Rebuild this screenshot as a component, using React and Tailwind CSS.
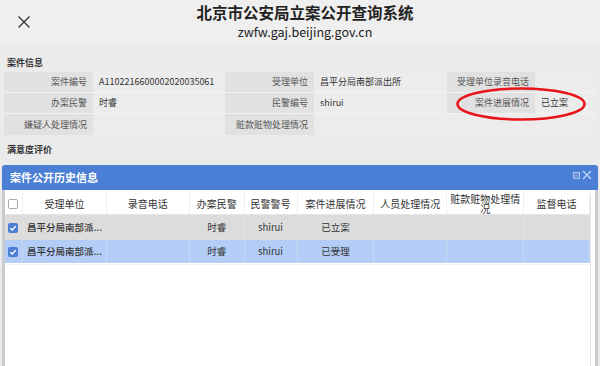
import React from "react";

const font = { fontFamily: '"Noto Sans CJK SC", "Noto Sans", sans-serif' };

function InfoRow({ cells, last }) {
  return (
    <div className={"flex h-[21px] " + (last ? "" : "border-b border-[#f3f3f3]")}>
      {cells.map((c, i) => (
        <div
          key={i}
          className={
            "flex items-center text-[9px] " +
            (c.label
              ? "justify-end pr-[6px] bg-[#e1e1e1] text-[#555]"
              : "justify-start pl-[6px] bg-[#ececec] text-[#333]")
          }
          style={{ width: c.w, flex: c.grow ? 1 : "none" }}
        >
          {c.t}
        </div>
      ))}
    </div>
  );
}

function Check({ checked }) {
  return checked ? (
    <div className="w-[10px] h-[10px] rounded-[2px] bg-[#4a7fd5] flex items-center justify-center">
      <svg width="8" height="8" viewBox="0 0 8 8">
        <path d="M1.2 4.2 L3.2 6 L6.8 2" fill="none" stroke="white" strokeWidth="1.3" />
      </svg>
    </div>
  ) : (
    <div className="w-[10px] h-[10px] rounded-[2px] bg-white border border-[#aaa]" />
  );
}

const cols = [18, 84, 83, 55, 53, 77, 73, 77, 66];

export default function App() {
  const headers = ["", "受理单位", "录音电话", "办案民警", "民警警号", "案件进展情况", "人员处理情况", "赃款赃物处理情\n况", "监督电话"];
  const rows = [
    { bg: "bg-[#dcdcdc]", status: "已立案" },
    { bg: "bg-[#b4cdf6]", status: "已受理" },
  ];
  return (
    <div className="relative w-[600px] h-[366px] overflow-hidden bg-[#ebebeb]" style={font}>
      {/* top bar */}
      <div className="relative h-[45px] bg-[#efefef] flex flex-col items-center pl-[10px]">
        <svg className="absolute left-[18px] top-[16px]" width="12" height="12" viewBox="0 0 12 12">
          <path d="M0.5 0.5 L11.5 11.5 M11.5 0.5 L0.5 11.5" stroke="#333" strokeWidth="1.3" />
        </svg>
        <div className="mt-[2px] text-[15.5px] leading-[20px] font-bold text-[#222]">北京市公安局立案公开查询系统</div>
        <div className="text-[12.5px] leading-[16px] text-[#222] mt-[2px]">zwfw.gaj.beijing.gov.cn</div>
      </div>

      {/* case info */}
      <div className="px-[7px] mt-[12px] h-[15px] text-[9px] leading-[12px] font-bold text-[#333]">案件信息</div>
      <div className="mx-[4px]">
        <InfoRow
          cells={[
            { label: true, w: 89, t: "案件编号" },
            { w: 132, t: "A110221660000202003 5061".replace(" ", "") },
            { label: true, w: 89, t: "受理单位" },
            { w: 133, t: "昌平分局南部派出所" },
            { label: true, w: 88, t: "受理单位录音电话" },
            { grow: true, t: "" },
          ]}
        />
        <InfoRow
          cells={[
            { label: true, w: 89, t: "办案民警" },
            { w: 132, t: "时睿" },
            { label: true, w: 89, t: "民警编号" },
            { w: 133, t: "shirui" },
            { label: true, w: 88, t: "案件进展情况" },
            { grow: true, t: "已立案" },
          ]}
        />
        <InfoRow
          last
          cells={[
            { label: true, w: 89, t: "嫌疑人处理情况" },
            { w: 132, t: "" },
            { label: true, w: 89, t: "赃款赃物处理情况" },
            { grow: true, t: "" },
          ]}
        />
      </div>
      <div className="px-[7px] mt-[9px] text-[9px] leading-[12px] font-bold text-[#333]">满意度评价</div>

      {/* red annotation ellipse */}
      <svg className="absolute left-[455px] top-[86px]" width="132" height="36" viewBox="0 0 132 36">
        <ellipse cx="66" cy="18" rx="63.5" ry="15.5" fill="none" stroke="#e8141a" strokeWidth="2.6" />
      </svg>

      {/* dialog */}
      <div className="absolute left-[2px] right-[2px] top-[165px] bottom-0 flex flex-col">
        <div className="h-[25px] bg-[#4a7fd5] rounded-t-[3px] flex items-center px-[8px] relative">
          <span className="text-[11px] font-bold text-white">案件公开历史信息</span>
          <div className="absolute right-[6px] top-[5px] flex items-center gap-[2px]">
            <div className="w-[7px] h-[7px] border-[1.5px] border-[#a9c4ee] bg-[#6f98dc]" />
            <svg width="10" height="10" viewBox="0 0 10 10">
              <path d="M1 1 L9 9 M9 1 L1 9" stroke="#c6d8f5" strokeWidth="1.2" />
            </svg>
          </div>
        </div>
        <div className="flex-1 bg-white border-x-[3px] border-[#c9ccd1] pt-[3px]">
          <div className="w-[586px] border-r border-[#e4e4e4] h-full">
            {/* header row */}
            <div className="flex h-[22px] bg-white border-b border-[#e6e6e6]">
              {headers.map((h, i) => (
                <div
                  key={i}
                  className="flex items-center justify-center text-[10px] leading-[9.5px] text-[#333] text-center border-r border-[#eeeeee] whitespace-pre-line"
                  style={{ width: cols[i] }}
                >
                  {i === 0 ? <Check /> : h}
                </div>
              ))}
            </div>
            {rows.map((r, ri) => {
              const cells = [<Check checked />, "昌平分局南部派...", "", "时睿", "shirui", r.status, "", "", ""];
              return (
                <div key={ri} className={"flex " + (ri === 0 ? "h-[25px] " : "h-[23px] ") + r.bg}>
                  {cells.map((c, i) => (
                    <div
                      key={i}
                      className={
                        "flex items-center text-[9.5px] text-[#333] border-r border-[#e8e8e8]/40 " +
                        (i === 1 ? "justify-start pl-[4px] font-medium" : "justify-center")
                      }
                      style={{ width: cols[i] }}
                    >
                      {c}
                    </div>
                  ))}
                </div>
              );
            })}
            <div className="h-[2px] border-b border-[#f2f2f2]" />
          </div>
        </div>
      </div>
    </div>
  );
}
